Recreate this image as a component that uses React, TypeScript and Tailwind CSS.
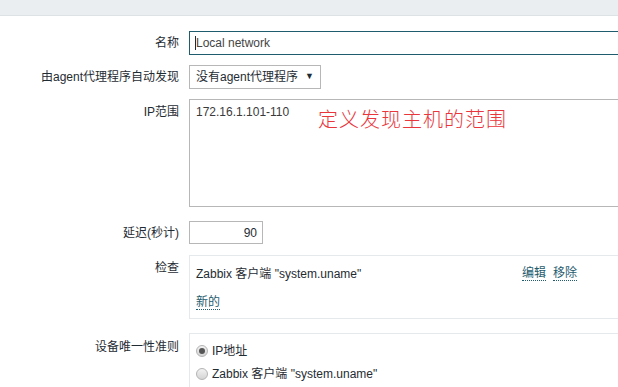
import React from "react";

const font = { fontFamily: '"Liberation Sans", Arial, "Noto Sans CJK SC", sans-serif' };

function Radio({ checked }: { checked?: boolean }) {
  return (
    <span className="inline-flex h-[12px] w-[12px] items-center justify-center rounded-full border border-[#b4b4b4] bg-gradient-to-b from-[#f2f2f2] to-[#d4d4d4]">
      {checked && <span className="h-[6px] w-[6px] rounded-full bg-[#555]" />}
    </span>
  );
}

export default function App() {
  return (
    <div className="h-[387px] w-[618px] overflow-hidden bg-white text-[12px] text-[#1f2c33]" style={font}>
      <div className="h-[16px] border-b border-[#dde2e5] bg-[#ebeef0]" />
      <div className="flex flex-col pt-[15px]">
        {/* name */}
        <div className="flex items-center">
          <div className="w-[179px] text-right">名称</div>
          <div className="ml-[10px] flex h-[24px] flex-1 items-center border border-[#1f5c6e] pl-[5px] mr-[-10px]">
            <span className="h-[14px] w-px bg-[#1f2c33]" />
            <span className="text-[#444]">Local network</span>
          </div>
        </div>
        {/* proxy */}
        <div className="mt-[10px] flex items-center">
          <div className="w-[179px] text-right">由agent代理程序自动发现</div>
          <div className="ml-[10px] flex h-[24px] w-[132px] shrink-0 items-center justify-between whitespace-nowrap border border-[#b7b7b7] pl-[6px] pr-[6px]">
            <span>没有agent代理程序</span>
            <span className="text-[9px]">▼</span>
          </div>
        </div>
        {/* ip range */}
        <div className="mt-[10px] flex items-start">
          <div className="w-[179px] pt-[4px] text-right">IP范围</div>
          <div className="relative ml-[10px] mr-[-10px] h-[108px] flex-1 border border-[#b7b7b7] px-[6px] pt-[3px]">
            <span className="text-[#3a3a3a]">172.16.1.101-110</span>
            <span className="absolute left-[128px] top-[4px] whitespace-nowrap text-[20px] tracking-[1px] text-[#e8363c]" style={{ fontFamily: '"Noto Sans CJK SC", sans-serif', fontWeight: 300 }}>
              定义发现主机的范围
            </span>
          </div>
        </div>
        {/* delay */}
        <div className="mt-[14px] flex items-center">
          <div className="w-[179px] text-right">延迟(秒计)</div>
          <div className="ml-[10px] flex h-[23px] w-[74px] items-center justify-end border border-[#b7b7b7] pr-[5px]">
            90
          </div>
        </div>
        {/* checks */}
        <div className="mt-[11px] flex items-start">
          <div className="w-[179px] pt-[4px] text-right">检查</div>
          <div className="ml-[10px] mr-[-10px] h-[64px] flex-1 border border-[#e6e9eb] pl-[6px] pt-[9px]">
            <div className="flex items-center">
              <span className="w-[326px]">Zabbix 客户端 "system.uname"</span>
              <span className="border-b border-dotted border-[#1f5c6e] leading-[13px] text-[#1f5c6e]">编辑</span>
              <span className="ml-[7px] border-b border-dotted border-[#1f5c6e] leading-[13px] text-[#1f5c6e]">移除</span>
            </div>
            <div className="mt-[10px]">
              <span className="border-b border-dotted border-[#1f5c6e] leading-[13px] text-[#1f5c6e]">新的</span>
            </div>
          </div>
        </div>
        {/* uniqueness */}
        <div className="mt-[14px] flex items-start">
          <div className="w-[179px] pt-[5px] text-right">设备唯一性准则</div>
          <div className="ml-[10px] mr-[-10px] h-[70px] flex-1 border border-[#e6e9eb] pl-[6px] pt-[8px]">
            <div className="flex items-center gap-[4px]">
              <Radio checked />
              <span>IP地址</span>
            </div>
            <div className="mt-[5px] flex items-center gap-[4px]">
              <Radio />
              <span>Zabbix 客户端 "system.uname"</span>
            </div>
          </div>
        </div>
      </div>
    </div>
  );
}
